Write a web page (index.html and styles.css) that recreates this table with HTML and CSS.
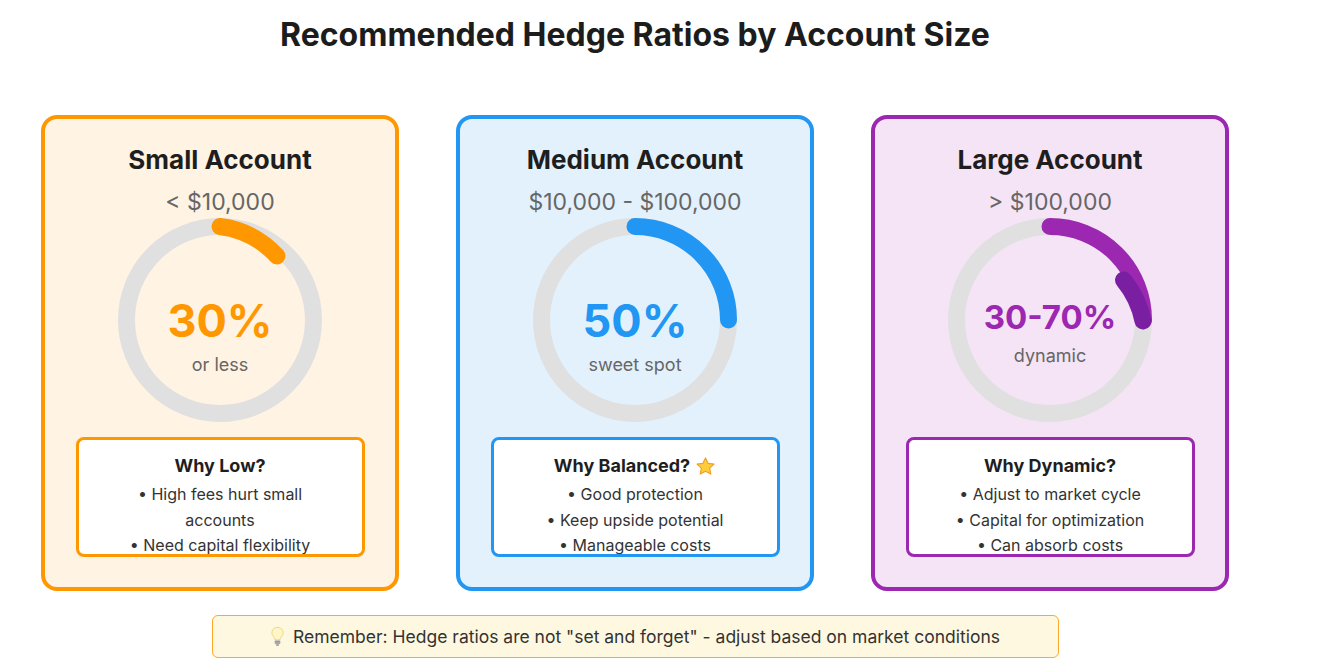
FILE: index.html
```html
<!DOCTYPE html>
<html lang="en">
<head>
<meta charset="utf-8">
<title>Recommended Hedge Ratios by Account Size</title>
<link rel="stylesheet" href="styles.css">
</head>
<body>
<div class="page">
  <h1 class="title">Recommended Hedge Ratios by Account Size</h1>
  <div class="cards">
    <section class="card card-small">
      <h2 class="card-title">Small Account</h2>
      <div class="range">&lt; $10,000</div>
      <div class="gauge">
        <svg class="gauge-svg" viewBox="-102 -102 204 204" width="204" height="204">
          <circle r="93.5" class="ring"/>
          <path class="arc arc-orange" d="M0,-93.5 A93.5,93.5 0 0 1 57,-64"/>
        </svg>
        <div class="gauge-text">
          <div class="pct pct-orange">30%</div>
          <div class="pct-note">or less</div>
        </div>
      </div>
      <div class="why why-orange">
        <h3 class="why-title">Why Low?</h3>
        <ul class="why-list">
          <li>• High fees hurt small accounts</li>
          <li>• Need capital flexibility</li>
        </ul>
      </div>
    </section>

    <section class="card card-medium">
      <h2 class="card-title">Medium Account</h2>
      <div class="range">$10,000 - $100,000</div>
      <div class="gauge">
        <svg class="gauge-svg" viewBox="-102 -102 204 204" width="204" height="204">
          <circle r="93.5" class="ring"/>
          <path class="arc arc-blue" d="M0,-93.5 A93.5,93.5 0 0 1 93.5,0"/>
        </svg>
        <div class="gauge-text">
          <div class="pct pct-blue">50%</div>
          <div class="pct-note">sweet spot</div>
        </div>
      </div>
      <div class="why why-blue">
        <h3 class="why-title">Why Balanced?
          <svg class="star" viewBox="0 0 24 24" width="21" height="21"><path d="M12 2.2l2.95 6.2 6.75.85-4.95 4.7 1.3 6.75L12 17.35 5.95 20.7l1.3-6.75L2.3 9.25l6.75-.85z"/></svg>
        </h3>
        <ul class="why-list">
          <li>• Good protection</li>
          <li>• Keep upside potential</li>
          <li>• Manageable costs</li>
        </ul>
      </div>
    </section>

    <section class="card card-large">
      <h2 class="card-title">Large Account</h2>
      <div class="range">&gt; $100,000</div>
      <div class="gauge">
        <svg class="gauge-svg" viewBox="-102 -102 204 204" width="204" height="204">
          <circle r="93.5" class="ring"/>
          <path class="arc arc-purple" d="M0,-93.5 A93.5,93.5 0 0 1 93.5,0"/>
          <path class="arc arc-purple-dark" d="M73.5,-40 A93.5,93.5 0 0 1 93,1"/>
        </svg>
        <div class="gauge-text">
          <div class="pct pct-purple pct-range">30-70%</div>
          <div class="pct-note pct-note-range">dynamic</div>
        </div>
      </div>
      <div class="why why-purple">
        <h3 class="why-title">Why Dynamic?</h3>
        <ul class="why-list">
          <li>• Adjust to market cycle</li>
          <li>• Capital for optimization</li>
          <li>• Can absorb costs</li>
        </ul>
      </div>
    </section>
  </div>

  <div class="note">
    <svg class="bulb" viewBox="0 0 16 22" width="15" height="21">
      <path class="bulb-glass" d="M8 1.2c3.5 0 6 2.5 6 5.7 0 2.3-1.3 3.6-2.2 4.8-.7.9-1 1.8-1 2.8H5.2c0-1-.3-1.9-1-2.8C3.3 10.5 2 9.2 2 6.9 2 3.7 4.5 1.2 8 1.2z"/>
      <rect class="bulb-base" x="5" y="15" width="6" height="4.2" rx="1"/>
      <path class="bulb-line" d="M5.2 16.4h5.6M5.2 17.9h5.6"/>
      <path class="bulb-tip" d="M6.4 19.4h3.2l-.6 1.4H7z"/>
    </svg>
    <span class="note-text">Remember: Hedge ratios are not "set and forget" - adjust based on market conditions</span>
  </div>
</div>
</body>
</html>
```

FILE: styles.css
```css
html, body {
  margin: 0;
  padding: 0;
  background: #ffffff;
}

.page {
  width: 1270px;
  box-sizing: border-box;
  padding: 15px 41px 0;
  font-family: Inter, "Noto Sans", "Liberation Sans", sans-serif;
  color: #222;
}

.title {
  margin: 0;
  font-size: 32px;
  line-height: 40px;
  font-weight: 700;
  text-align: center;
  color: #1c1c1c;
}

.cards {
  display: flex;
  gap: 57px;
  margin-top: 60px;
}

.card {
  width: 358px;
  height: 476px;
  box-sizing: border-box;
  border: 4px solid;
  border-radius: 16px;
  padding-top: 26px;
  display: flex;
  flex-direction: column;
  align-items: center;
  text-align: center;
}

.card-small { border-color: #ff9800; background: #fff3e3; }
.card-medium { border-color: #2196f3; background: #e3f1fc; }
.card-large { border-color: #9c27b0; background: #f4e4f6; }

.card-title {
  margin: 0;
  font-size: 26px;
  line-height: 30px;
  font-weight: 700;
  color: #1e1e1e;
}

.range {
  margin-top: 13px;
  font-size: 23px;
  line-height: 28px;
  color: #666;
}

.gauge {
  margin-top: 2px;
  width: 204px;
  height: 204px;
  display: grid;
}

.gauge > * {
  grid-area: 1 / 1;
}

.ring {
  fill: none;
  stroke: #e0e0e0;
  stroke-width: 17;
}

.arc {
  fill: none;
  stroke-width: 17;
  stroke-linecap: round;
}

.arc-orange { stroke: #ff9800; }
.arc-blue { stroke: #2196f3; }
.arc-purple { stroke: #9c27b0; }
.arc-purple-dark { stroke: #7b1fa2; }

.gauge-text {
  padding-top: 78px;
  display: flex;
  flex-direction: column;
  align-items: center;
}

.pct {
  font-size: 45px;
  line-height: 50px;
  font-weight: 700;
}

.pct-range {
  font-size: 33px;
  line-height: 40px;
  margin-top: 1px;
}

.pct-orange { color: #ff9800; }
.pct-blue { color: #2196f3; }
.pct-purple { color: #9c27b0; }

.pct-note {
  margin-top: 8px;
  font-size: 18px;
  line-height: 22px;
  color: #666;
}

.pct-note-range {
  margin-top: 8px;
}

.why {
  margin-top: 15px;
  width: 289px;
  height: 120px;
  box-sizing: border-box;
  border: 3px solid;
  border-radius: 8px;
  background: #fff;
  overflow: hidden;
  padding-top: 15px;
}

.why-orange { border-color: #ff9800; }
.why-blue { border-color: #2196f3; }
.why-purple { border-color: #9c27b0; }

.why-title {
  margin: 0;
  font-size: 18px;
  line-height: 22px;
  font-weight: 700;
  color: #1e1e1e;
  display: flex;
  align-items: center;
  justify-content: center;
  gap: 5px;
}

.star {
  fill: #ffcc3a;
  stroke: #f0a020;
  stroke-width: 1.3;
  stroke-linejoin: round;
}

.why-list {
  list-style: none;
  margin: 5px auto 0;
  padding: 0;
  width: 210px;
  font-size: 16px;
  line-height: 25.5px;
  color: #333;
}

.note {
  width: 847px;
  height: 43px;
  margin: 24px auto 0;
  box-sizing: border-box;
  border: 1.5px solid #ffa726;
  border-radius: 6px;
  background: #fff8e1;
  display: flex;
  align-items: center;
  justify-content: center;
  gap: 8px;
  font-size: 17.5px;
  color: #333;
}

.bulb-glass {
  fill: #fff6c8;
  stroke: #e8cf7a;
  stroke-width: 0.9;
}

.bulb-base {
  fill: #b8b8b8;
}

.bulb-line {
  stroke: #8a8a8a;
  stroke-width: 0.7;
  fill: none;
}

.bulb-tip {
  fill: #777;
}
```
